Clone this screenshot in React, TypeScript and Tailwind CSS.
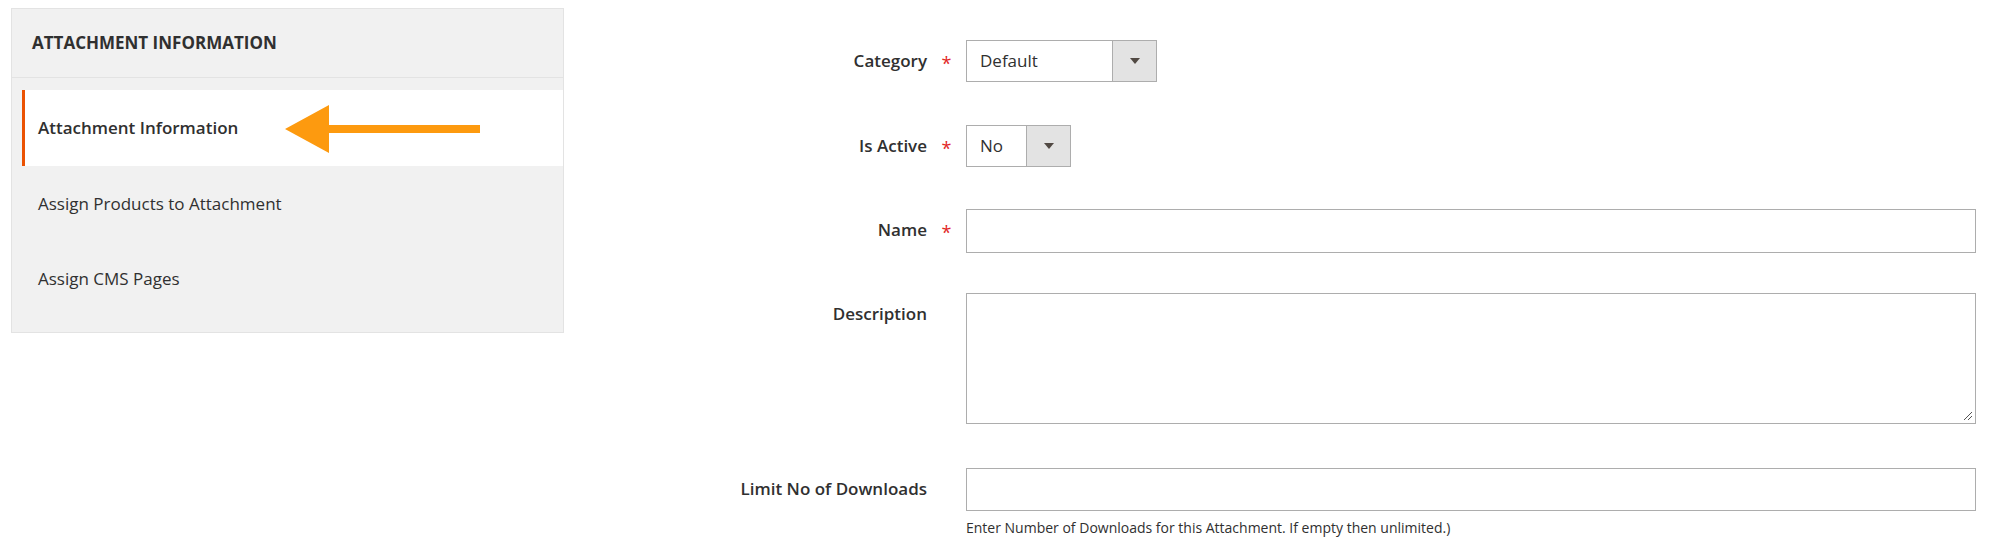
import React from "react";

const F = { fontFamily: '"Open Sans", "Liberation Sans", sans-serif' };

function Caret() {
  return (
    <svg width="12" height="8" viewBox="0 0 12 8"><path d="M1 1h10L6 7z" fill="#514943" /></svg>
  );
}

function Row({ label, req, children, top }: { label: string; req?: boolean; children: React.ReactNode; top: string }) {
  return (
    <div className={`flex ${top}`}>
      <div className="w-[287px] text-right text-[17px] font-semibold text-[#303030] leading-[42px]">{label}</div>
      <div className="w-[39px] text-center text-[18px] text-[#e22626] leading-[46px]">{req ? "*" : ""}</div>
      <div className="flex-1">{children}</div>
    </div>
  );
}

export default function App() {
  return (
    <div className="w-[1999px] h-[540px] bg-white flex text-[#303030]" style={F}>
      <div className="ml-[11px] mt-[8px] w-[553px] h-[325px] bg-[#f1f1f1] border border-[#e3e3e3] flex flex-col">
        <div className="h-[69px] border-b border-[#e3e3e3] flex items-center pl-[20px] text-[17px] font-bold uppercase text-[#303030]">
          Attachment Information
        </div>
        <div className="relative mt-[12px] ml-[10px] h-[76px] bg-white border-l-[3px] border-[#eb5202] flex items-center pl-[13px] text-[17px] font-semibold">
          Attachment Information
          <svg className="absolute left-[260px] top-[14px]" width="200" height="50" viewBox="0 0 200 50">
            <path d="M0 25 L44 1 L44 21 L195 21 L195 29 L44 29 L44 49 Z" fill="#fd9a0f" />
          </svg>
        </div>
        <div className="h-[75px] ml-[13px] pl-[13px] flex items-center text-[17px]">Assign Products to Attachment</div>
        <div className="h-[75px] ml-[13px] pl-[13px] flex items-center text-[17px]">Assign CMS Pages</div>
      </div>
      <div className="ml-[76px] w-[1336px] pt-[40px]">
        <Row label="Category" req top="">
          <div className="flex w-[191px] h-[42px] border border-[#adadad]">
            <div className="flex-1 flex items-center pl-[13px] text-[17px]">Default</div>
            <div className="w-[44px] bg-[#e3e3e3] border-l border-[#adadad] flex items-center justify-center"><Caret /></div>
          </div>
        </Row>
        <Row label="Is Active" req top="mt-[39px]">
          <div className="flex w-[105px] h-[42px] border border-[#adadad]">
            <div className="flex-1 flex items-center pl-[13px] text-[17px]">No</div>
            <div className="w-[44px] bg-[#e3e3e3] border-l border-[#adadad] flex items-center justify-center"><Caret /></div>
          </div>
        </Row>
        <Row label="Name" req top="mt-[38px]">
          <div className="w-[1010px] h-[44px] border border-[#adadad]" />
        </Row>
        <Row label="Description" top="mt-[38px]">
          <div className="relative w-[1010px] h-[131px] border border-[#adadad]">
            <svg className="absolute right-[2px] bottom-[2px]" width="12" height="12" viewBox="0 0 12 12">
              <path d="M11 3L3 11M11 7L7 11" stroke="#555" strokeWidth="1" />
            </svg>
          </div>
        </Row>
        <Row label="Limit No of Downloads" top="mt-[44px]">
          <div className="w-[1010px] h-[43px] border border-[#adadad]" />
          <div className="mt-[6px] text-[14px] text-[#303030]">Enter Number of Downloads for this Attachment. If empty then unlimited.)</div>
        </Row>
      </div>
    </div>
  );
}
